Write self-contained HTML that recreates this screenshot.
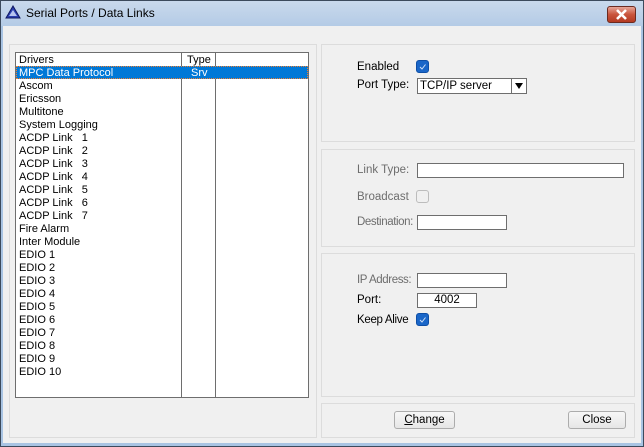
<!DOCTYPE html>
<html><head><style>
*{margin:0;padding:0;box-sizing:border-box}
body{width:644px;height:447px;overflow:hidden;background:#f0f0f0;font-family:"Liberation Sans",Arial,sans-serif;font-size:11px;color:#000;position:relative}
.a{position:absolute}
.frame{left:0;top:0;width:644px;height:447px;border:1px solid #3c4a5c;background:#f0f0f0}
.title{left:1px;top:1px;width:642px;height:25px;background:linear-gradient(#c9d9ec,#b4cbe6)}
.side{background:#a9c4e3}
.grp{border:1px solid #dcdcdc;background:#f0f0f0}
.lb{left:15px;top:52px;width:294px;height:346px;border:1px solid #6e6e6e;background:#fff}
.row{position:absolute;left:3px;height:13px;line-height:15px;white-space:pre}
.in{border:1px solid #6e6e6e;background:#fff}
.cb{width:13px;height:13px;border-radius:3px;background:#1a66c8;border:1px solid #0d4ea6}
.cb svg{display:block}
.btn{border:1px solid #acacac;border-radius:3px;background:linear-gradient(#f7f7f7,#e6e6e6);text-align:center;line-height:16px;font-size:11.5px}
.g{color:#6d6d6d}
.lbl{font-size:11.5px;line-height:14px}
</style></head><body>
<div class="a frame"></div>
<div class="a title"></div>
<div class="a side" style="left:1px;top:26px;width:2px;height:419px"></div>
<div class="a side" style="left:641px;top:26px;width:2px;height:419px"></div>
<div class="a side" style="left:1px;top:443px;width:642px;height:3px"></div>
<svg class="a" style="left:5px;top:5px" width="16" height="14"><polygon points="8,1 15,13 1,13" fill="#2a3fb0" stroke="#101860"/><polygon points="8,5 12,11 4,11" fill="#b6c4f0"/></svg>
<div class="a" style="left:26px;top:6px;font-size:12px;color:#000">Serial Ports / Data Links</div>
<div class="a" style="left:607px;top:6px;width:29px;height:17px;border:1px solid #6b2a20;border-radius:3px;background:linear-gradient(#e7a597,#c9543c 50%,#b33a22)"><svg width="27" height="15"><path d="M9 3 L18 12 M18 3 L9 12" stroke="#fff" stroke-width="2.6"/></svg></div>

<div class="a grp" style="left:9px;top:44px;width:308px;height:394px"></div>
<div class="a lb">
 <div class="a" style="left:165px;top:0;width:1px;height:344px;background:#6e6e6e"></div>
 <div class="a" style="left:199px;top:0;width:1px;height:344px;background:#6e6e6e"></div>
 <div class="a" style="left:0;top:13px;width:292px;height:13px;background:#0078d7;outline:1px dotted #f08030;outline-offset:-1px"></div>
 <div class="row" style="top:0">Drivers</div><div class="row" style="top:0;left:171px">Type</div>
 <div class="row" style="top:13px;color:#fff">MPC Data Protocol</div><div class="row" style="top:13px;left:175px;color:#fff">Srv</div>
 <div class="row" style="top:26px">Ascom</div>
 <div class="row" style="top:39px">Ericsson</div>
 <div class="row" style="top:52px">Multitone</div>
 <div class="row" style="top:65px">System Logging</div>
 <div class="row" style="top:78px">ACDP Link   1</div>
 <div class="row" style="top:91px">ACDP Link   2</div>
 <div class="row" style="top:104px">ACDP Link   3</div>
 <div class="row" style="top:117px">ACDP Link   4</div>
 <div class="row" style="top:130px">ACDP Link   5</div>
 <div class="row" style="top:143px">ACDP Link   6</div>
 <div class="row" style="top:156px">ACDP Link   7</div>
 <div class="row" style="top:169px">Fire Alarm</div>
 <div class="row" style="top:182px">Inter Module</div>
 <div class="row" style="top:195px">EDIO 1</div>
 <div class="row" style="top:208px">EDIO 2</div>
 <div class="row" style="top:221px">EDIO 3</div>
 <div class="row" style="top:234px">EDIO 4</div>
 <div class="row" style="top:247px">EDIO 5</div>
 <div class="row" style="top:260px">EDIO 6</div>
 <div class="row" style="top:273px">EDIO 7</div>
 <div class="row" style="top:286px">EDIO 8</div>
 <div class="row" style="top:299px">EDIO 9</div>
 <div class="row" style="top:312px">EDIO 10</div>
</div>

<div class="a grp" style="left:321px;top:44px;width:314px;height:98px"></div>
<div class="a grp" style="left:321px;top:149px;width:314px;height:98px"></div>
<div class="a grp" style="left:321px;top:253px;width:314px;height:144px"></div>
<div class="a grp" style="left:321px;top:403px;width:314px;height:35px"></div>

<div class="a lbl" style="left:357px;top:60px">Enabled</div>
<div class="a cb" style="left:416px;top:60px"><svg width="11" height="11"><path d="M3 6 L5 8 L8.5 3.5" stroke="#cfe0f7" stroke-width="1" fill="none"/></svg></div>
<div class="a lbl" style="left:357px;top:78px">Port Type:</div>
<div class="a in" style="left:417px;top:78px;width:110px;height:16px"><div class="a lbl" style="left:2px;top:0px">TCP/IP server</div><div class="a" style="left:93px;top:0;width:1px;height:14px;background:#6e6e6e"></div><svg class="a" style="left:97px;top:3px" width="9" height="8"><polygon points="0,1 8,1 4,7" fill="#000"/></svg></div>

<div class="a lbl g" style="left:357px;top:163px">Link Type:</div>
<div class="a in" style="left:417px;top:163px;width:207px;height:15px"></div>
<div class="a lbl g" style="left:357px;top:190px">Broadcast</div>
<div class="a" style="left:416px;top:190px;width:13px;height:13px;border:1px solid #bcbcbc;border-radius:3px;background:#f0f0f0"></div>
<div class="a lbl g" style="left:357px;top:215px;letter-spacing:-0.4px">Destination:</div>
<div class="a in" style="left:417px;top:215px;width:90px;height:15px"></div>

<div class="a lbl g" style="left:357px;top:273px;letter-spacing:-0.4px">IP Address:</div>
<div class="a in" style="left:417px;top:273px;width:90px;height:15px"></div>
<div class="a lbl" style="left:357px;top:293px">Port:</div>
<div class="a in lbl" style="left:417px;top:293px;width:60px;height:15px;text-align:center;line-height:13px">4002</div>
<div class="a lbl" style="left:357px;top:313px;letter-spacing:-0.3px">Keep Alive</div>
<div class="a cb" style="left:416px;top:313px"><svg width="11" height="11"><path d="M3 6 L5 8 L8.5 3.5" stroke="#cfe0f7" stroke-width="1" fill="none"/></svg></div>

<div class="a btn" style="left:394px;top:411px;width:61px;height:18px"><u>C</u>hange</div>
<div class="a btn" style="left:568px;top:411px;width:58px;height:18px">Close</div>
</body></html>
